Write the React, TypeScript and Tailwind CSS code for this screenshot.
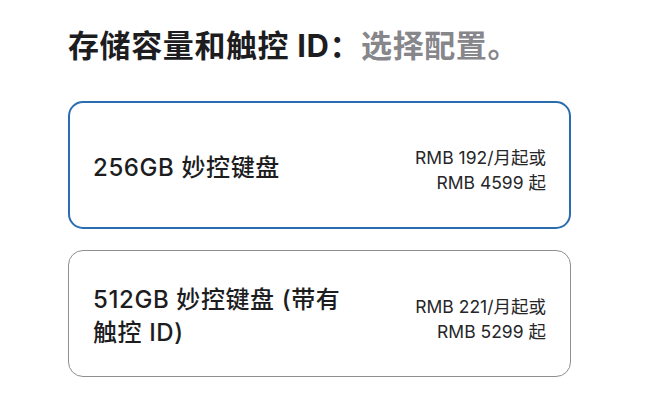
export default function App() {
  return (
    <div
      className="w-[660px] h-[403px] bg-white pl-[68px] pt-[28px] text-[#1d1d1f]"
      style={{ fontFamily: 'Inter, "Noto Sans CJK SC", sans-serif' }}
    >
      <h1 className="text-[31px] leading-[36px] font-bold tracking-[0.6px]">
        存储容量和触控 ID：<span className="text-[#86868b]">选择配置。</span>
      </h1>

      <div className="mt-[37px] w-[503px] flex flex-col gap-[21px]">
        {/* Selected option */}
        <div className="h-[128px] rounded-[15px] border-2 border-[#2a6db0] pt-[4px] px-[23px] flex items-center justify-between">
          <div className="text-[24px] leading-[33px] font-medium tracking-[0.6px]">256GB 妙控键盘</div>
          <div className="mt-[6px] text-right text-[17.5px] leading-[25px] text-[#262628]">
            <p>RMB 192/月起或</p>
            <p>RMB 4599 起</p>
          </div>
        </div>

        <div className="h-[127px] rounded-[15px] border border-[#8e8e93] pt-[4px] px-[24px] flex items-center justify-between">
          <div className="w-[260px] text-[24px] leading-[33px] font-medium tracking-[0.6px]">
            512GB 妙控键盘 (带有触控 ID)
          </div>
          <div className="mt-[6px] text-right text-[17.5px] leading-[25px] text-[#262628]">
            <p>RMB 221/月起或</p>
            <p>RMB 5299 起</p>
          </div>
        </div>
      </div>
    </div>
  );
}
